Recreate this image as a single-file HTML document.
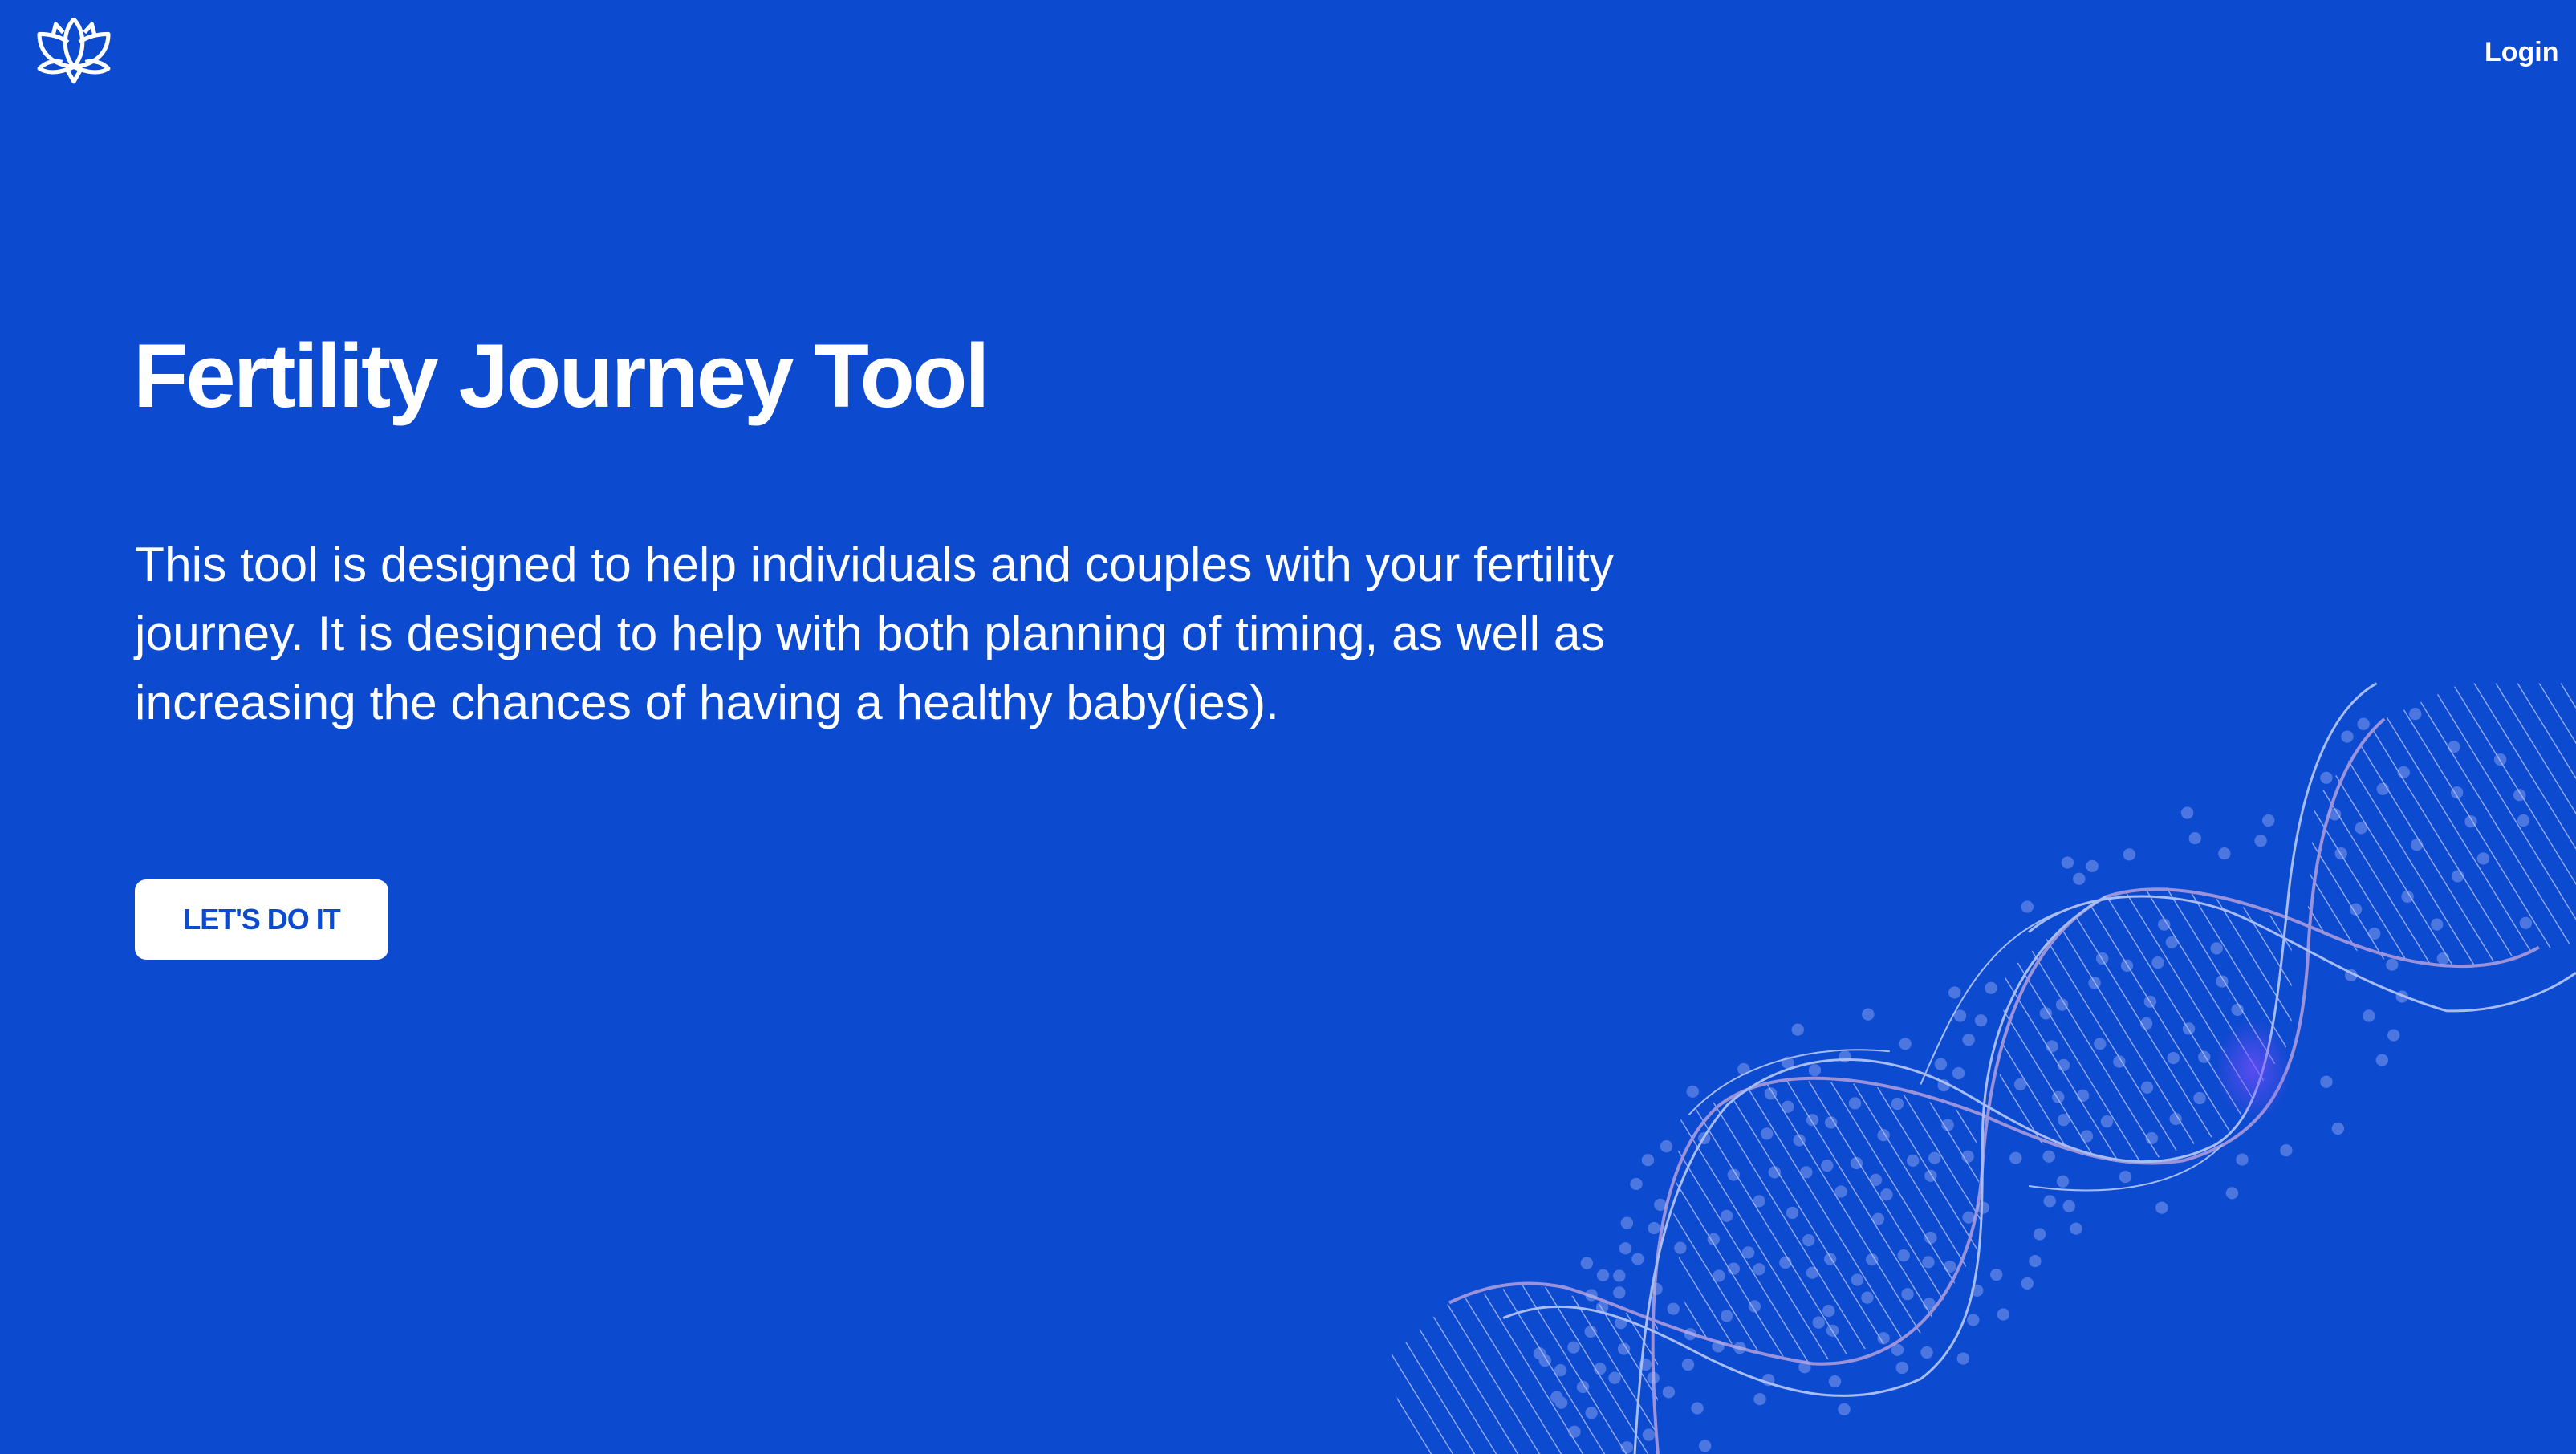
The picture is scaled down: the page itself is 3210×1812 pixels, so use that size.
<!DOCTYPE html>
<html><head><meta charset="utf-8"><style>
html,body{margin:0;padding:0;}
body{width:3210px;height:1812px;background:#0c4acf;position:relative;overflow:hidden;font-family:"Liberation Sans",sans-serif;color:#fff;}
.login{position:absolute;left:3096px;top:46px;font-size:34px;font-weight:bold;}
h1{position:absolute;left:166px;top:404px;margin:0;font-size:112px;font-weight:bold;white-space:nowrap;letter-spacing:-3px;}
.p{position:absolute;left:168px;top:660px;font-size:60.5px;line-height:86px;white-space:nowrap;}
.btn{position:absolute;left:168px;top:1096px;width:316px;height:100px;background:#fff;border-radius:14px;color:#0c4acf;font-weight:bold;font-size:36px;text-align:center;line-height:100px;letter-spacing:-1px;}
</style></head><body>
<svg style="position:absolute;left:46px;top:22px" width="92" height="90" viewBox="0 0 88 88" fill="none" stroke="#fff" stroke-width="5" stroke-linejoin="round">
<path d="M44 2 C30 16 30 44 44 60 C58 44 58 16 44 2Z"/>
<path d="M37 30 C26 22 14 20 2 20 C2 44 20 58 44 60"/>
<path d="M51 30 C62 22 74 20 86 20 C86 44 68 58 44 60"/>
<path d="M31 18 L22 8 L18 24"/>
<path d="M57 18 L66 8 L70 24"/>
<path d="M30 54 C20 52 10 54 2 62 C14 70 30 66 44 60"/>
<path d="M58 54 C68 52 78 54 86 62 C74 70 58 66 44 60"/>
<path d="M36 64 L44 78 L52 64"/>
</svg>
<div class="login">Login</div>
<h1>Fertility Journey Tool</h1>
<div class="p">This tool is designed to help individuals and couples with your fertility<br>journey. It is designed to help with both planning of timing, as well as<br>increasing the chances of having a healthy baby(ies).</div>
<div class="btn">LET'S DO IT</div>
<svg style="position:absolute;left:1700px;top:820px" width="1510" height="992" viewBox="0 0 1568 1568" preserveAspectRatio="none">
<defs>
<pattern id="h" width="26" height="26" patternUnits="userSpaceOnUse" patternTransform="rotate(-22)">
<line x1="13" y1="0" x2="13" y2="26" stroke="#b8c4ff" stroke-width="1.5" vector-effect="non-scaling-stroke" opacity="0.8"/>
</pattern>
<radialGradient id="g"><stop offset="0" stop-color="#7a4dff" stop-opacity="0.7"/><stop offset="1" stop-color="#7a4dff" stop-opacity="0"/></radialGradient>
</defs>
<g fill="url(#h)">
<polygon points="30,1380 110,1270 215,1230 380,1310 380,1568 60,1568"/>
<polygon points="410,900 530,830 650,840 790,900 800,1150 720,1330 580,1390 420,1330 400,1100"/>
<polygon points="830,620 950,470 1050,450 1200,520 1200,750 1120,930 1000,1000 880,960 820,880"/>
<polygon points="1230,280 1320,120 1420,50 1568,50 1568,560 1420,610 1300,590 1220,520"/>
</g>
<g fill="none">
<path d="M110 1270 C150 1240 200 1220 260 1240 C330 1270 420 1350 580 1390 C700 1400 790 1250 800 1000 C810 780 850 560 960 470 C1040 430 1150 480 1240 540 C1330 600 1440 640 1520 570" stroke="#9a92db" stroke-width="4" vector-effect="non-scaling-stroke"/>
<path d="M380 1568 C365 1300 370 1000 460 880 C540 790 680 830 800 900 C900 970 980 1010 1060 990 C1180 940 1215 800 1222 560 C1230 350 1260 200 1320 120" stroke="#9a92db" stroke-width="4" vector-effect="non-scaling-stroke"/>
<path d="M180 1300 C260 1250 330 1290 420 1360 C520 1440 620 1490 720 1420 C800 1330 800 1150 800 950 C800 750 850 560 960 470" stroke="#a8bdf4" stroke-width="3" vector-effect="non-scaling-stroke"/>
<path d="M350 1568 C360 1300 380 1040 470 880 C560 760 680 770 780 860 C860 930 980 1050 1100 960 C1170 900 1180 700 1195 480 C1210 250 1250 100 1310 50" stroke="#a8bdf4" stroke-width="3" vector-effect="non-scaling-stroke"/>
<path d="M860 540 C920 460 1030 450 1120 500 C1200 550 1280 640 1400 695 C1480 700 1540 650 1568 620" stroke="#a8bdf4" stroke-width="3" vector-effect="non-scaling-stroke"/>
<path d="M720 840 C760 700 800 560 900 500" stroke="#a8bdf4" stroke-width="2" vector-effect="non-scaling-stroke"/>
<path d="M420 900 C480 800 580 760 680 775" stroke="#a8bdf4" stroke-width="2" vector-effect="non-scaling-stroke"/>
<path d="M860 1040 C950 1060 1050 1050 1110 960" stroke="#a8bdf4" stroke-width="2" vector-effect="non-scaling-stroke"/>
</g>
<ellipse cx="1150" cy="810" rx="50" ry="100" fill="url(#g)"/>
<g fill="#b4c0ff" opacity="0.38">
<ellipse cx="1065" cy="305" rx="8" ry="12"/><ellipse cx="1075" cy="355" rx="8" ry="12"/><ellipse cx="1113" cy="385" rx="8" ry="12"/><ellipse cx="990" cy="387" rx="8" ry="12"/><ellipse cx="910" cy="403" rx="8" ry="12"/><ellipse cx="942" cy="410" rx="8" ry="12"/><ellipse cx="925" cy="435" rx="8" ry="12"/><ellipse cx="858" cy="490" rx="8" ry="12"/><ellipse cx="1170" cy="320" rx="8" ry="12"/><ellipse cx="1160" cy="360" rx="8" ry="12"/>
<ellipse cx="1293" cy="130" rx="8" ry="12"/><ellipse cx="1272" cy="155" rx="8" ry="12"/><ellipse cx="1360" cy="110" rx="8" ry="12"/><ellipse cx="1410" cy="175" rx="8" ry="12"/><ellipse cx="1470" cy="200" rx="8" ry="12"/><ellipse cx="1345" cy="225" rx="8" ry="12"/><ellipse cx="1245" cy="236" rx="8" ry="12"/><ellipse cx="1414" cy="265" rx="8" ry="12"/><ellipse cx="1318" cy="258" rx="8" ry="12"/><ellipse cx="1495" cy="270" rx="8" ry="12"/><ellipse cx="1256" cy="308" rx="8" ry="12"/><ellipse cx="1290" cy="335" rx="8" ry="12"/><ellipse cx="1432" cy="322" rx="8" ry="12"/><ellipse cx="1500" cy="320" rx="8" ry="12"/><ellipse cx="1362" cy="368" rx="8" ry="12"/><ellipse cx="1264" cy="385" rx="8" ry="12"/><ellipse cx="1448" cy="395" rx="8" ry="12"/><ellipse cx="1415" cy="430" rx="8" ry="12"/><ellipse cx="1350" cy="470" rx="8" ry="12"/><ellipse cx="1283" cy="495" rx="8" ry="12"/><ellipse cx="1307" cy="543" rx="8" ry="12"/><ellipse cx="1388" cy="525" rx="8" ry="12"/><ellipse cx="1503" cy="522" rx="8" ry="12"/><ellipse cx="1396" cy="592" rx="8" ry="12"/><ellipse cx="1330" cy="604" rx="8" ry="12"/><ellipse cx="1277" cy="625" rx="8" ry="12"/><ellipse cx="1343" cy="667" rx="8" ry="12"/><ellipse cx="1300" cy="705" rx="8" ry="12"/><ellipse cx="1332" cy="743" rx="8" ry="12"/><ellipse cx="1317" cy="792" rx="8" ry="12"/><ellipse cx="1245" cy="835" rx="8" ry="12"/><ellipse cx="1260" cy="927" rx="8" ry="12"/><ellipse cx="1193" cy="970" rx="8" ry="12"/><ellipse cx="1136" cy="988" rx="8" ry="12"/><ellipse cx="1123" cy="1054" rx="8" ry="12"/><ellipse cx="1032" cy="1083" rx="8" ry="12"/>
<ellipse cx="1035" cy="525" rx="8" ry="12"/><ellipse cx="1045" cy="560" rx="8" ry="12"/><ellipse cx="1103" cy="572" rx="8" ry="12"/><ellipse cx="955" cy="592" rx="8" ry="12"/><ellipse cx="987" cy="606" rx="8" ry="12"/><ellipse cx="1027" cy="600" rx="8" ry="12"/><ellipse cx="1110" cy="637" rx="8" ry="12"/><ellipse cx="945" cy="640" rx="8" ry="12"/><ellipse cx="903" cy="683" rx="8" ry="12"/><ellipse cx="1017" cy="677" rx="8" ry="12"/><ellipse cx="1130" cy="693" rx="8" ry="12"/><ellipse cx="882" cy="700" rx="8" ry="12"/><ellipse cx="1067" cy="730" rx="8" ry="12"/><ellipse cx="1012" cy="720" rx="8" ry="12"/><ellipse cx="952" cy="760" rx="8" ry="12"/><ellipse cx="890" cy="765" rx="8" ry="12"/><ellipse cx="1087" cy="786" rx="8" ry="12"/><ellipse cx="1047" cy="788" rx="8" ry="12"/><ellipse cx="977" cy="795" rx="8" ry="12"/><ellipse cx="905" cy="802" rx="8" ry="12"/><ellipse cx="849" cy="840" rx="8" ry="12"/><ellipse cx="1013" cy="846" rx="8" ry="12"/><ellipse cx="930" cy="862" rx="8" ry="12"/><ellipse cx="898" cy="865" rx="8" ry="12"/><ellipse cx="1081" cy="867" rx="8" ry="12"/><ellipse cx="905" cy="910" rx="8" ry="12"/><ellipse cx="961" cy="913" rx="8" ry="12"/><ellipse cx="1050" cy="908" rx="8" ry="12"/><ellipse cx="935" cy="942" rx="8" ry="12"/><ellipse cx="1019" cy="946" rx="8" ry="12"/><ellipse cx="886" cy="982" rx="8" ry="12"/><ellipse cx="843" cy="985" rx="8" ry="12"/><ellipse cx="985" cy="1022" rx="8" ry="12"/><ellipse cx="904" cy="1031" rx="8" ry="12"/><ellipse cx="887" cy="1070" rx="8" ry="12"/><ellipse cx="912" cy="1080" rx="8" ry="12"/><ellipse cx="874" cy="1135" rx="8" ry="12"/><ellipse cx="921" cy="1124" rx="8" ry="12"/><ellipse cx="868" cy="1188" rx="8" ry="12"/><ellipse cx="858" cy="1232" rx="8" ry="12"/><ellipse cx="827" cy="1293" rx="8" ry="12"/><ellipse cx="818" cy="1215" rx="8" ry="12"/>
<ellipse cx="764" cy="659" rx="8" ry="12"/><ellipse cx="811" cy="650" rx="8" ry="12"/><ellipse cx="771" cy="705" rx="8" ry="12"/><ellipse cx="798" cy="714" rx="8" ry="12"/><ellipse cx="782" cy="752" rx="8" ry="12"/><ellipse cx="652" cy="702" rx="8" ry="12"/><ellipse cx="561" cy="732" rx="8" ry="12"/><ellipse cx="700" cy="760" rx="8" ry="12"/><ellipse cx="746" cy="800" rx="8" ry="12"/><ellipse cx="769" cy="818" rx="8" ry="12"/><ellipse cx="622" cy="785" rx="8" ry="12"/><ellipse cx="548" cy="797" rx="8" ry="12"/><ellipse cx="491" cy="810" rx="8" ry="12"/><ellipse cx="583" cy="812" rx="8" ry="12"/><ellipse cx="750" cy="842" rx="8" ry="12"/><ellipse cx="425" cy="854" rx="8" ry="12"/><ellipse cx="526" cy="858" rx="8" ry="12"/><ellipse cx="635" cy="877" rx="8" ry="12"/><ellipse cx="690" cy="878" rx="8" ry="12"/><ellipse cx="548" cy="884" rx="8" ry="12"/><ellipse cx="580" cy="910" rx="8" ry="12"/><ellipse cx="604" cy="915" rx="8" ry="12"/><ellipse cx="755" cy="920" rx="8" ry="12"/><ellipse cx="521" cy="937" rx="8" ry="12"/><ellipse cx="672" cy="940" rx="8" ry="12"/><ellipse cx="440" cy="946" rx="8" ry="12"/><ellipse cx="563" cy="950" rx="8" ry="12"/><ellipse cx="391" cy="962" rx="8" ry="12"/><ellipse cx="710" cy="990" rx="8" ry="12"/><ellipse cx="738" cy="985" rx="8" ry="12"/><ellipse cx="781" cy="982" rx="8" ry="12"/><ellipse cx="367" cy="989" rx="8" ry="12"/><ellipse cx="599" cy="1000" rx="8" ry="12"/><ellipse cx="637" cy="995" rx="8" ry="12"/><ellipse cx="531" cy="1013" rx="8" ry="12"/><ellipse cx="572" cy="1013" rx="8" ry="12"/><ellipse cx="478" cy="1018" rx="8" ry="12"/><ellipse cx="733" cy="1020" rx="8" ry="12"/><ellipse cx="662" cy="1028" rx="8" ry="12"/><ellipse cx="352" cy="1036" rx="8" ry="12"/><ellipse cx="617" cy="1051" rx="8" ry="12"/><ellipse cx="676" cy="1057" rx="8" ry="12"/><ellipse cx="511" cy="1070" rx="8" ry="12"/><ellipse cx="383" cy="1077" rx="8" ry="12"/><ellipse cx="801" cy="1083" rx="8" ry="12"/><ellipse cx="554" cy="1093" rx="8" ry="12"/><ellipse cx="469" cy="1099" rx="8" ry="12"/><ellipse cx="665" cy="1105" rx="8" ry="12"/><ellipse cx="782" cy="1102" rx="8" ry="12"/><ellipse cx="340" cy="1113" rx="8" ry="12"/><ellipse cx="375" cy="1123" rx="8" ry="12"/><ellipse cx="733" cy="1142" rx="8" ry="12"/><ellipse cx="452" cy="1145" rx="8" ry="12"/><ellipse cx="575" cy="1147" rx="8" ry="12"/><ellipse cx="409" cy="1162" rx="8" ry="12"/><ellipse cx="338" cy="1163" rx="8" ry="12"/><ellipse cx="497" cy="1171" rx="8" ry="12"/><ellipse cx="698" cy="1177" rx="8" ry="12"/><ellipse cx="354" cy="1184" rx="8" ry="12"/><ellipse cx="603" cy="1184" rx="8" ry="12"/><ellipse cx="657" cy="1185" rx="8" ry="12"/><ellipse cx="545" cy="1191" rx="8" ry="12"/><ellipse cx="730" cy="1190" rx="8" ry="12"/><ellipse cx="288" cy="1192" rx="8" ry="12"/><ellipse cx="758" cy="1199" rx="8" ry="12"/><ellipse cx="478" cy="1203" rx="8" ry="12"/><ellipse cx="511" cy="1204" rx="8" ry="12"/><ellipse cx="580" cy="1211" rx="8" ry="12"/><ellipse cx="309" cy="1216" rx="8" ry="12"/><ellipse cx="330" cy="1217" rx="8" ry="12"/><ellipse cx="459" cy="1217" rx="8" ry="12"/><ellipse cx="638" cy="1225" rx="8" ry="12"/><ellipse cx="378" cy="1243" rx="8" ry="12"/><ellipse cx="793" cy="1246" rx="8" ry="12"/><ellipse cx="330" cy="1250" rx="8" ry="12"/><ellipse cx="703" cy="1253" rx="8" ry="12"/><ellipse cx="651" cy="1260" rx="8" ry="12"/><ellipse cx="294" cy="1255" rx="8" ry="12"/><ellipse cx="731" cy="1272" rx="8" ry="12"/><ellipse cx="505" cy="1277" rx="8" ry="12"/><ellipse cx="308" cy="1279" rx="8" ry="12"/><ellipse cx="400" cy="1282" rx="8" ry="12"/><ellipse cx="601" cy="1286" rx="8" ry="12"/><ellipse cx="469" cy="1296" rx="8" ry="12"/><ellipse cx="788" cy="1304" rx="8" ry="12"/><ellipse cx="332" cy="1310" rx="8" ry="12"/><ellipse cx="588" cy="1309" rx="8" ry="12"/><ellipse cx="606" cy="1325" rx="8" ry="12"/><ellipse cx="293" cy="1327" rx="8" ry="12"/><ellipse cx="422" cy="1332" rx="8" ry="12"/><ellipse cx="672" cy="1340" rx="8" ry="12"/><ellipse cx="271" cy="1358" rx="8" ry="12"/><ellipse cx="336" cy="1361" rx="8" ry="12"/><ellipse cx="458" cy="1356" rx="8" ry="12"/><ellipse cx="486" cy="1359" rx="8" ry="12"/><ellipse cx="728" cy="1368" rx="8" ry="12"/><ellipse cx="690" cy="1363" rx="8" ry="12"/><ellipse cx="227" cy="1370" rx="8" ry="12"/><ellipse cx="775" cy="1380" rx="8" ry="12"/><ellipse cx="234" cy="1384" rx="8" ry="12"/><ellipse cx="364" cy="1392" rx="8" ry="12"/><ellipse cx="419" cy="1392" rx="8" ry="12"/><ellipse cx="570" cy="1397" rx="8" ry="12"/><ellipse cx="696" cy="1398" rx="8" ry="12"/><ellipse cx="305" cy="1400" rx="8" ry="12"/><ellipse cx="254" cy="1403" rx="8" ry="12"/><ellipse cx="374" cy="1418" rx="8" ry="12"/><ellipse cx="324" cy="1418" rx="8" ry="12"/><ellipse cx="523" cy="1422" rx="8" ry="12"/><ellipse cx="609" cy="1425" rx="8" ry="12"/><ellipse cx="283" cy="1436" rx="8" ry="12"/><ellipse cx="394" cy="1446" rx="8" ry="12"/><ellipse cx="249" cy="1456" rx="8" ry="12"/><ellipse cx="512" cy="1460" rx="8" ry="12"/><ellipse cx="255" cy="1467" rx="8" ry="12"/><ellipse cx="431" cy="1478" rx="8" ry="12"/><ellipse cx="621" cy="1480" rx="8" ry="12"/><ellipse cx="294" cy="1487" rx="8" ry="12"/><ellipse cx="272" cy="1524" rx="8" ry="12"/><ellipse cx="368" cy="1530" rx="8" ry="12"/><ellipse cx="441" cy="1552" rx="8" ry="12"/><ellipse cx="340" cy="1555" rx="8" ry="12"/>
</g>
</svg>
</body></html>
